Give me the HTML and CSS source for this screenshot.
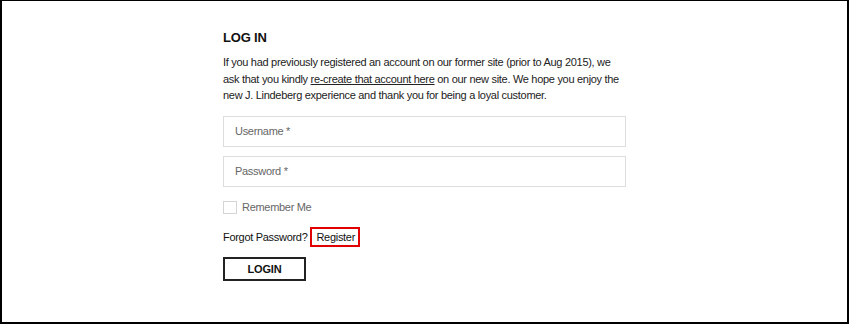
FILE: index.html
```html
<!DOCTYPE html>
<html lang="en">
  <head>
    <meta charset="UTF-8">
    <title>Log In</title>
    <link rel="stylesheet" href="styles.css">
  </head>
  <body>
    <div class="frame">
      <div class="login">
        <h1>LOG IN</h1>
        <p class="intro">If you had previously registered an account on our former site (prior to Aug 2015), we ask that you kindly <a href="#">re-create that account here</a> on our new site. We hope you enjoy the new J. Lindeberg experience and thank you for being a loyal customer.</p>
        <input type="text" class="form-control" placeholder="Username *">
        <input type="password" class="form-control" placeholder="Password *">
        <label class="remember">
          <span class="check"></span>
          Remember Me
        </label>
        <div class="links">
          <a href="#" class="forgot">Forgot Password?</a>
          <a href="#" class="register">Register</a>
        </div>
        <button class="btn">LOGIN</button>
      </div>
    </div>
  </body>
</html>
```

FILE: styles.css
```css
body {
  margin: 0;
  padding: 0;
  font-family: 'Liberation Sans', Arial, sans-serif;
  background: #ffffff;
}

.frame {
  box-sizing: border-box;
  width: 849px;
  height: 324px;
  border: 2px solid #000000;
  border-top-width: 1px;
}

.login {
  width: 403px;
  margin: 0 auto;
  padding-top: 29px;
}

h1 {
  margin: 0 0 8px;
  font-size: 13px;
  line-height: 16px;
  font-weight: bold;
  letter-spacing: -0.2px;
  color: #111111;
}

.intro {
  margin: 0 0 12px;
  font-size: 11px;
  line-height: 16.5px;
  letter-spacing: -0.3px;
  color: #222222;
}

.intro a {
  color: #222222;
  text-decoration: underline;
}

.form-control {
  display: block;
  box-sizing: border-box;
  width: 100%;
  height: 31px;
  margin: 0 0 9px;
  padding: 0 11px;
  border: 1px solid #dddddd;
  border-radius: 0;
  font-family: inherit;
  font-size: 11px;
  letter-spacing: -0.3px;
  color: #222222;
  outline: none;
}

.form-control::placeholder {
  color: #666666;
}

.remember {
  display: flex;
  align-items: center;
  gap: 5px;
  margin-top: 14px;
  font-size: 11px;
  line-height: 13px;
  letter-spacing: -0.3px;
  color: #666666;
}

.check {
  box-sizing: border-box;
  width: 14px;
  height: 13px;
  border: 1px solid #d4d4d4;
  background: #ffffff;
}

.links {
  display: flex;
  align-items: center;
  gap: 3px;
  margin-top: 13px;
  font-size: 11px;
  letter-spacing: -0.3px;
}

.links a {
  color: #111111;
  text-decoration: none;
}

.register {
  box-sizing: border-box;
  height: 20px;
  line-height: 16px;
  padding: 0 3px 0 4px;
  border: 2px solid #e00000;
}

.btn {
  display: block;
  box-sizing: border-box;
  width: 83px;
  height: 24px;
  margin-top: 10px;
  padding: 0;
  border: 2px solid #222222;
  background: #ffffff;
  font-family: inherit;
  font-size: 11px;
  font-weight: bold;
  letter-spacing: -0.2px;
  color: #111111;
  cursor: pointer;
}
```
